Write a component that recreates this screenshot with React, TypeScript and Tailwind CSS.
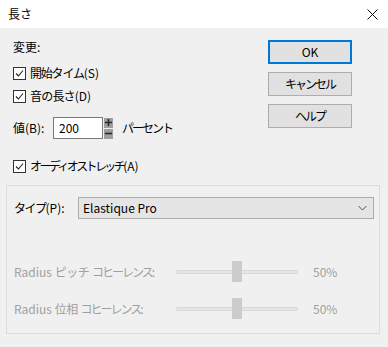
import React from 'react';

const font = { fontFamily: '"Noto Sans CJK JP", "Noto Sans", sans-serif' };

const CheckBox: React.FC = () => (
  <span className="w-[13px] h-[13px] border border-[#333333] bg-white flex items-center justify-center shrink-0">
    <svg width="9" height="9" viewBox="0 0 9 9">
      <path d="M1 4.5 L3.5 7 L8 1.5" fill="none" stroke="#222222" strokeWidth="1.1" />
    </svg>
  </span>
);

const CheckRow: React.FC<{ label: string; suffix: string; className?: string; labelClass?: string }> = ({
  label,
  suffix,
  className,
  labelClass,
}) => (
  <div className={`flex items-center h-[20px] gap-[4px] ${className ?? ''}`}>
    <CheckBox />
    <span>
      <span className={labelClass}>{label}</span>
      {suffix}
    </span>
  </div>
);

const Button: React.FC<{ label: string; focused?: boolean; labelClass?: string }> = ({ label, focused, labelClass }) => (
  <div
    className={`h-[24px] w-[84px] flex items-center justify-center bg-[#e1e1e1] ${
      focused ? 'border-2 border-[#0078d7]' : 'border border-[#adadad]'
    }`}
  >
    <span className={labelClass}>{label}</span>
  </div>
);

const SliderRow: React.FC<{ name: string; className?: string }> = ({ name, className }) => (
  <div className={`flex items-center h-[22px] text-[#a0a0a0] ${className ?? ''}`}>
    <span className="w-[162px]">
      Radius <span className="tracking-[-0.5px]">{name}</span> <span className="tracking-[-2px]">コヒーレンス</span>:
    </span>
    <div className="relative w-[122px] h-[22px] flex items-center">
      <div className="w-full h-[4px] bg-[#e6e6e6] border border-[#d9d9d9] rounded-[1px]" />
      <div className="absolute left-[56px] top-0 w-[10px] h-[21px] bg-[#cccccc]" />
    </div>
    <span className="ml-[15px]">50%</span>
  </div>
);

export default function App() {
  return (
    <div className="w-[388px] h-[347px] bg-[#f0f0f0] text-[12px] text-black overflow-hidden" style={font}>
      {/* title bar */}
      <div className="h-[28px] bg-white flex items-center justify-between pl-[8px] pr-[10px]">
        <span className="text-[12px]">長さ</span>
        <svg width="11" height="11" viewBox="0 0 11 11">
          <path d="M0.5 0.5 L10.5 10.5 M10.5 0.5 L0.5 10.5" stroke="#111111" strokeWidth="1" />
        </svg>
      </div>

      <div className="flex">
        <div className="flex-1 pl-[13px]">
          <div className="h-[20px] mt-[9px] flex items-center">変更:</div>
          <CheckRow label="開始タイム" suffix="(S)" className="mt-[6px]" labelClass="tracking-[-1.2px]" />
          <CheckRow label="音の長さ" suffix="(D)" className="mt-[3px]" labelClass="tracking-[-0.8px]" />
          <div className="flex items-center h-[22px] mt-[11px]">
            <span className="w-[40px]">値(B):</span>
            <div className="w-[50px] h-[22px] bg-white border border-[#7a7a7a] flex items-center pl-[5px]">200</div>
            <div className="ml-[1px] flex flex-col gap-[1px] w-[9px]">
              <div className="h-[10px] bg-[#9e9e9e] flex items-center justify-center">
                <svg width="7" height="7" viewBox="0 0 7 7">
                  <path d="M0 3.5 H7 M3.5 0 V7" stroke="#2a2a2a" strokeWidth="1.6" />
                </svg>
              </div>
              <div className="h-[10px] bg-[#9e9e9e] flex items-center justify-center">
                <svg width="7" height="7" viewBox="0 0 7 7">
                  <path d="M0 3.5 H7" stroke="#2a2a2a" strokeWidth="1.6" />
                </svg>
              </div>
            </div>
            <span className="ml-[9px] tracking-[-2px]">パーセント</span>
          </div>
          <CheckRow label="オーディオストレッチ" suffix="(A)" className="mt-[17px]" labelClass="tracking-[-2.6px]" />
        </div>

        <div className="w-[84px] mr-[36px] pt-[12px] flex flex-col gap-[8px]">
          <Button label="OK" focused />
          <Button label="キャンセル" labelClass="tracking-[-2px]" />
          <Button label="ヘルプ" labelClass="tracking-[-2px]" />
        </div>
      </div>

      {/* stretch group */}
      <div className="ml-[6px] mt-[9px] w-[374px] h-[149px] border border-[#dcdcdc] pt-[11px] pl-[7px]">
        <div className="flex items-center h-[22px]">
          <span className="w-[64px]">
            <span className="tracking-[-1.5px]">タイプ</span>(P):
          </span>
          <div className="w-[296px] h-[22px] bg-[#e5e5e5] border border-[#adadad] flex items-center justify-between pl-[4px] pr-[6px]">
            <span>Elastique Pro</span>
            <svg width="9" height="6" viewBox="0 0 9 6">
              <path d="M0.5 1 L4.5 5 L8.5 1" fill="none" stroke="#555555" strokeWidth="1" />
            </svg>
          </div>
        </div>
        <SliderRow name="ピッチ" className="mt-[42px]" />
        <SliderRow name="位相" className="mt-[15px]" />
      </div>
    </div>
  );
}
